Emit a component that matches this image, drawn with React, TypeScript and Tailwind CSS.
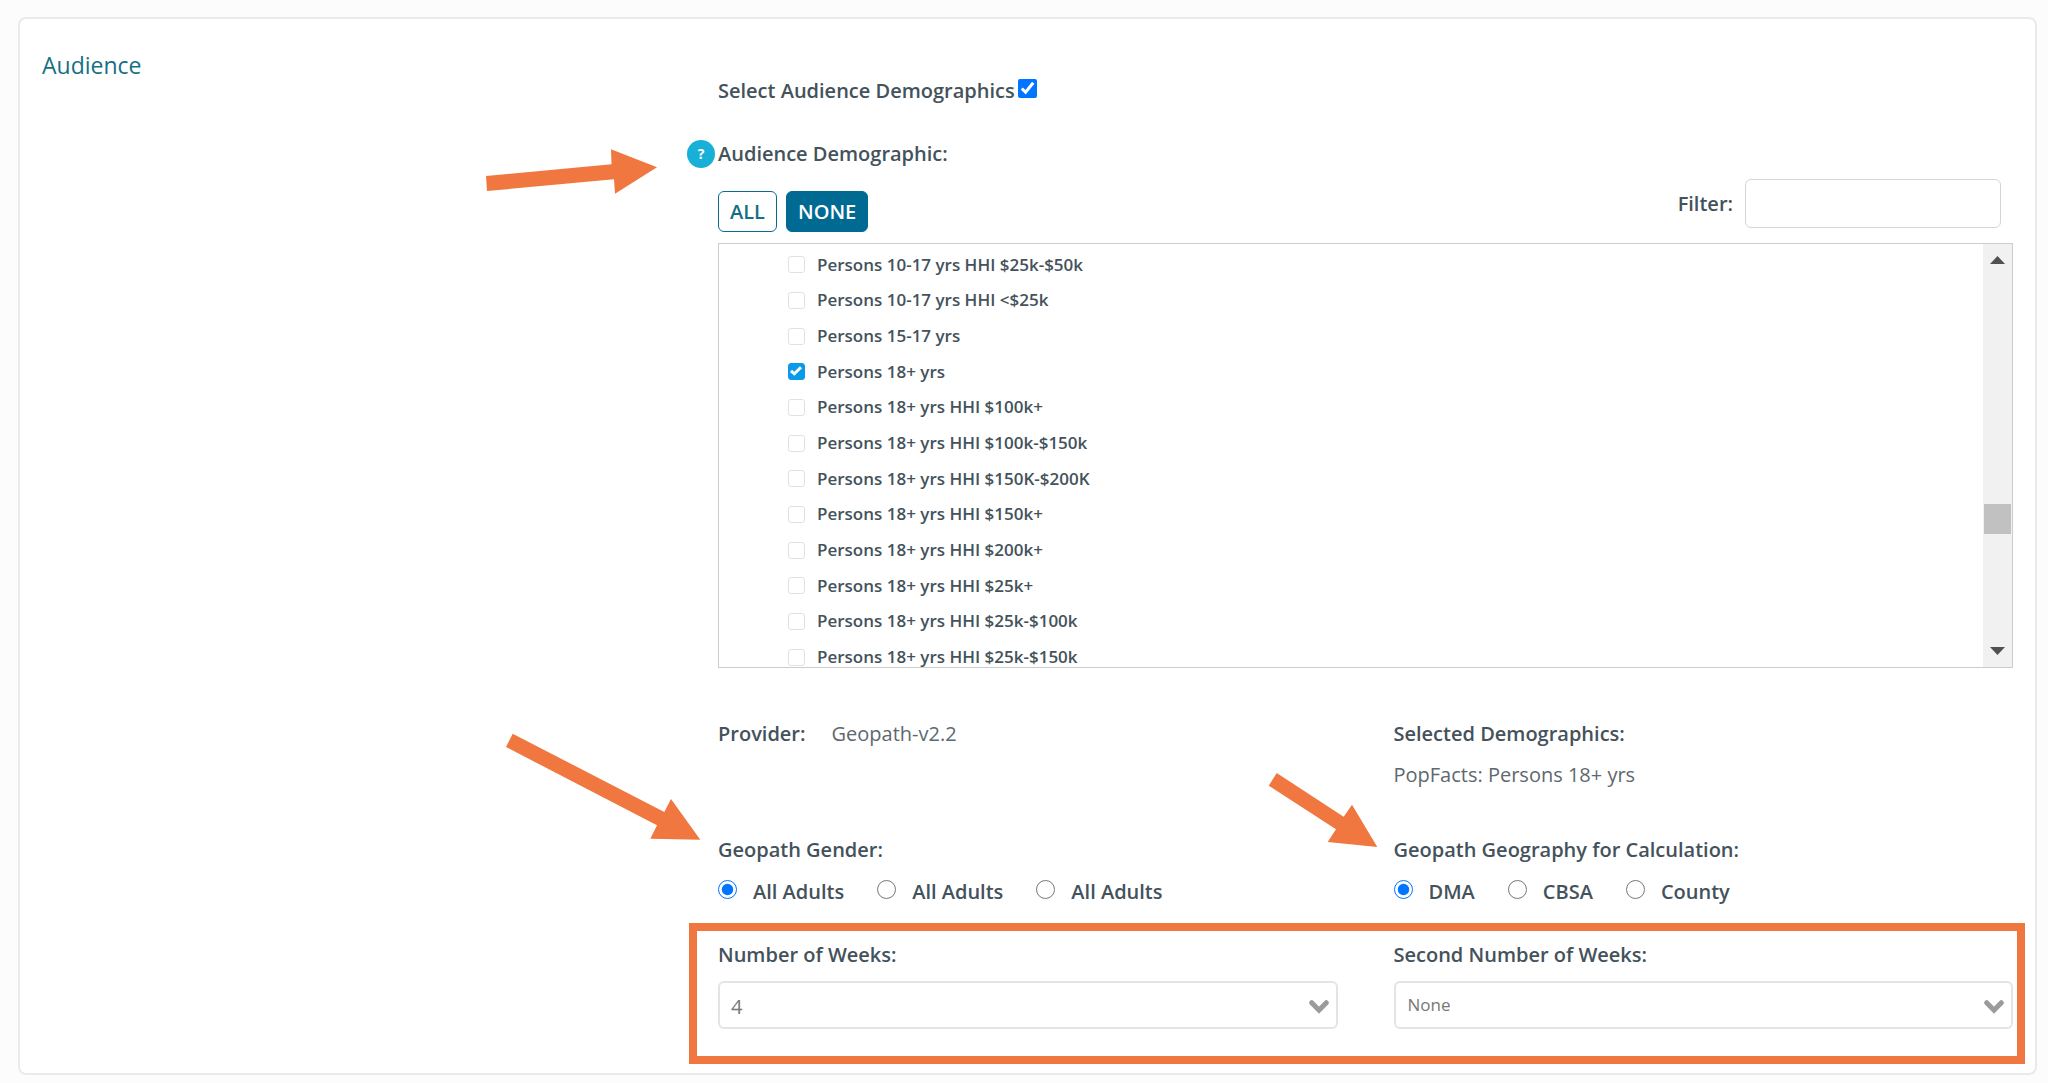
import { useState } from 'react';

interface Option {
  id: string;
  label: string;
}

const DEMOGRAPHICS: string[] = [
  'Persons 10-17 yrs HHI $25k-$50k',
  'Persons 10-17 yrs HHI <$25k',
  'Persons 15-17 yrs',
  'Persons 18+ yrs',
  'Persons 18+ yrs HHI $100k+',
  'Persons 18+ yrs HHI $100k-$150k',
  'Persons 18+ yrs HHI $150K-$200K',
  'Persons 18+ yrs HHI $150k+',
  'Persons 18+ yrs HHI $200k+',
  'Persons 18+ yrs HHI $25k+',
  'Persons 18+ yrs HHI $25k-$100k',
  'Persons 18+ yrs HHI $25k-$150k',
];

const GENDERS: Option[] = [
  { id: 'gender-1', label: 'All Adults' },
  { id: 'gender-2', label: 'All Adults' },
  { id: 'gender-3', label: 'All Adults' },
];

const GEOGRAPHIES: Option[] = [
  { id: 'dma', label: 'DMA' },
  { id: 'cbsa', label: 'CBSA' },
  { id: 'county', label: 'County' },
];

function RadioGroup({ name, legend, options }: { name: string; legend: string; options: Option[] }) {
  const [value, setValue] = useState(options[0]!.id);

  return (
    <fieldset>
      <legend className="font-semibold">{legend}</legend>
      <div className="mt-3.5 flex gap-[33px]">
        {options.map((o) => (
          <label key={o.id} className="flex items-start gap-4 font-semibold">
            <input
              type="radio"
              name={name}
              checked={value === o.id}
              onChange={() => setValue(o.id)}
              className="mt-0.5 h-[19px] w-[19px] accent-[#0075ff]"
            />
            {o.label}
          </label>
        ))}
      </div>
    </fieldset>
  );
}

function WeeksSelect({ id, label, options, small }: { id: string; label: string; options: string[]; small?: boolean }) {
  return (
    <div>
      <label htmlFor={id} className="block font-semibold">
        {label}
      </label>
      <div className="relative mt-3">
        <select
          id={id}
          className={`h-12 w-full appearance-none rounded-md border-2 border-[#e4e4e4] bg-white text-[#777] ${
            small ? 'pl-3 text-[17px]' : 'pl-[11px] pt-1 text-[20px]'
          }`}
        >
          {options.map((o) => (
            <option key={o}>{o}</option>
          ))}
        </select>
        <svg className="pointer-events-none absolute right-[9px] top-[19px] h-[14px] w-5" viewBox="0 0 20 14" fill="none">
          <path d="M2.7 2.7 10 10.2 17.3 2.7" stroke="#9b9b9b" strokeWidth="5" strokeLinecap="round" />
        </svg>
      </div>
    </div>
  );
}

function DemographicList({ checked, onToggle }: { checked: string[]; onToggle: (name: string) => void }) {
  return (
    <div className="mt-[11px] flex h-[425px] overflow-hidden border border-[#ccc]">
      <ul className="grid h-[431px] flex-1 grid-rows-12 pl-[69px] pt-[3px] text-[17px] font-semibold leading-6">
        {DEMOGRAPHICS.map((name) => (
          <li key={name} className="flex items-center">
            <label className="flex items-center gap-3">
              <span className="relative h-[17px] w-[17px]">
                <input
                  type="checkbox"
                  checked={checked.includes(name)}
                  onChange={() => onToggle(name)}
                  className="peer block h-full w-full appearance-none rounded-[3px] border border-[#dee2e6] bg-white checked:border-[#0a9aea] checked:bg-[#0a9aea]"
                />
                <svg
                  className="pointer-events-none absolute inset-0 hidden h-full w-full peer-checked:block"
                  viewBox="0 0 17 17"
                  fill="none"
                >
                  <path d="M3 7.8 6.3 10.8 13 4.2" stroke="#fff" strokeWidth="3" />
                </svg>
              </span>
              {name}
            </label>
          </li>
        ))}
      </ul>
      <div className="flex w-[29px] flex-col items-center bg-[#f1f1f1]">
        <svg className="mt-3 h-2 w-[15px]" viewBox="0 0 15 8">
          <path d="M0 8 7.5 0 15 8Z" fill="#505050" />
        </svg>
        <div className="mt-[240px] h-[30px] w-[27px] bg-[#c1c1c1]" />
        <svg className="mb-3 mt-auto h-2 w-[15px]" viewBox="0 0 15 8">
          <path d="M0 0 7.5 8 15 0Z" fill="#505050" />
        </svg>
      </div>
    </div>
  );
}

export default function App() {
  const [enabled, setEnabled] = useState(true);
  const [checked, setChecked] = useState<string[]>(['Persons 18+ yrs']);

  const toggle = (name: string) =>
    setChecked(checked.includes(name) ? checked.filter((n) => n !== name) : [...checked, name]);

  return (
    <div className="min-h-screen bg-[#fcfcfc] pb-2 pl-[18px] pr-[11px] pt-[17px] font-['Open_Sans',sans-serif] text-[20px] leading-7 text-[#44525b]">
      <section className="grid grid-cols-[698fr_1317fr] rounded-lg border-2 border-[#eaeaea] bg-white">
        <h2 className="pl-[22px] pt-[30px] text-[23px] leading-8 text-[#157084]">Audience</h2>

        <div className="pb-[9px] pr-[22px] pt-[58px]">
          <label className="flex items-start gap-[3px] font-semibold">
            Select Audience Demographics
            <input
              type="checkbox"
              checked={enabled}
              onChange={() => setEnabled(!enabled)}
              className="mt-0.5 h-[19px] w-[19px] accent-[#0075ff]"
            />
          </label>

          <div className="relative -ml-[31px] mt-[35px] flex items-center gap-[3px]">
            <svg
              className="pointer-events-none absolute right-full top-2 mr-[29px] h-[47px] w-[173px]"
              viewBox="0 0 173 47"
              fill="#f0773f"
            >
              <path d="M1 28 126.5 16.3 126 1.3 172 19.3 130 45.7 129 31.3 2 43Z" />
            </svg>
            <button
              type="button"
              aria-label="Help"
              className="h-7 w-7 rounded-full bg-[#19b0d7] text-center text-[14px] font-bold text-white"
            >
              ?
            </button>
            <span className="font-semibold">Audience Demographic:</span>
          </div>

          <div className="mt-[11px] flex items-start justify-between pr-3">
            <div className="mt-3 flex gap-[9px]">
              <button
                type="button"
                onClick={() => setChecked(DEMOGRAPHICS)}
                className="h-[41px] rounded-md border border-[#0b6b8f] bg-white px-[11px] font-semibold text-[#157084]"
              >
                ALL
              </button>
              <button
                type="button"
                onClick={() => setChecked([])}
                className="h-[41px] rounded-md border border-[#006a92] bg-[#006a92] px-[11px] font-semibold text-white"
              >
                NONE
              </button>
            </div>
            <label className="flex items-center gap-3 font-semibold">
              Filter:
              <input type="text" className="h-[49px] w-64 rounded-md border border-[#d5d5d5] bg-white px-3 font-normal" />
            </label>
          </div>

          <DemographicList checked={checked} onToggle={toggle} />

          <div className="mt-[52px] grid grid-cols-2 gap-x-14">
            <dl className="flex gap-[26px]">
              <dt className="font-semibold">Provider:</dt>
              <dd className="text-[#5d6870]">Geopath-v2.2</dd>
            </dl>
            <dl>
              <dt className="font-semibold">Selected Demographics:</dt>
              <dd className="mt-[13px] text-[#5d6870]">PopFacts: Persons 18+ yrs</dd>
            </dl>
          </div>

          <div className="mt-[47px] grid grid-cols-2 gap-x-14">
            <div className="relative">
              <svg
                className="pointer-events-none absolute -top-[103px] right-full mr-[17px] h-[107px] w-[196px]"
                viewBox="0 0 196 107"
                fill="#f0773f"
              >
                <path d="M7.7 0.7 159.3 79 166 66 195.3 106.7 145.3 105.7 152 92.3 1 14Z" />
              </svg>
              <RadioGroup name="gender" legend="Geopath Gender:" options={GENDERS} />
            </div>
            <div className="relative">
              <svg
                className="pointer-events-none absolute -top-16 right-full mr-4 h-[76px] w-[110px]"
                viewBox="0 0 110 76"
                fill="#f0773f"
              >
                <path d="M8.7 1 75.7 44.7 84 32.7 109.3 75 59.7 70 68 57.3 0.7 13.7Z" />
              </svg>
              <RadioGroup name="geography" legend="Geopath Geography for Calculation:" options={GEOGRAPHIES} />
            </div>
          </div>

          {/* Highlighted weeks row */}
          <div className="-ml-[29px] -mr-3 mt-[17px] grid grid-cols-2 gap-x-14 border-8 border-[#f0773f] pb-[27px] pl-[21px] pr-1 pt-2.5">
            <WeeksSelect id="weeks" label="Number of Weeks:" options={['4']} />
            <WeeksSelect id="second-weeks" label="Second Number of Weeks:" options={['None']} small />
          </div>
        </div>
      </section>
    </div>
  );
}
